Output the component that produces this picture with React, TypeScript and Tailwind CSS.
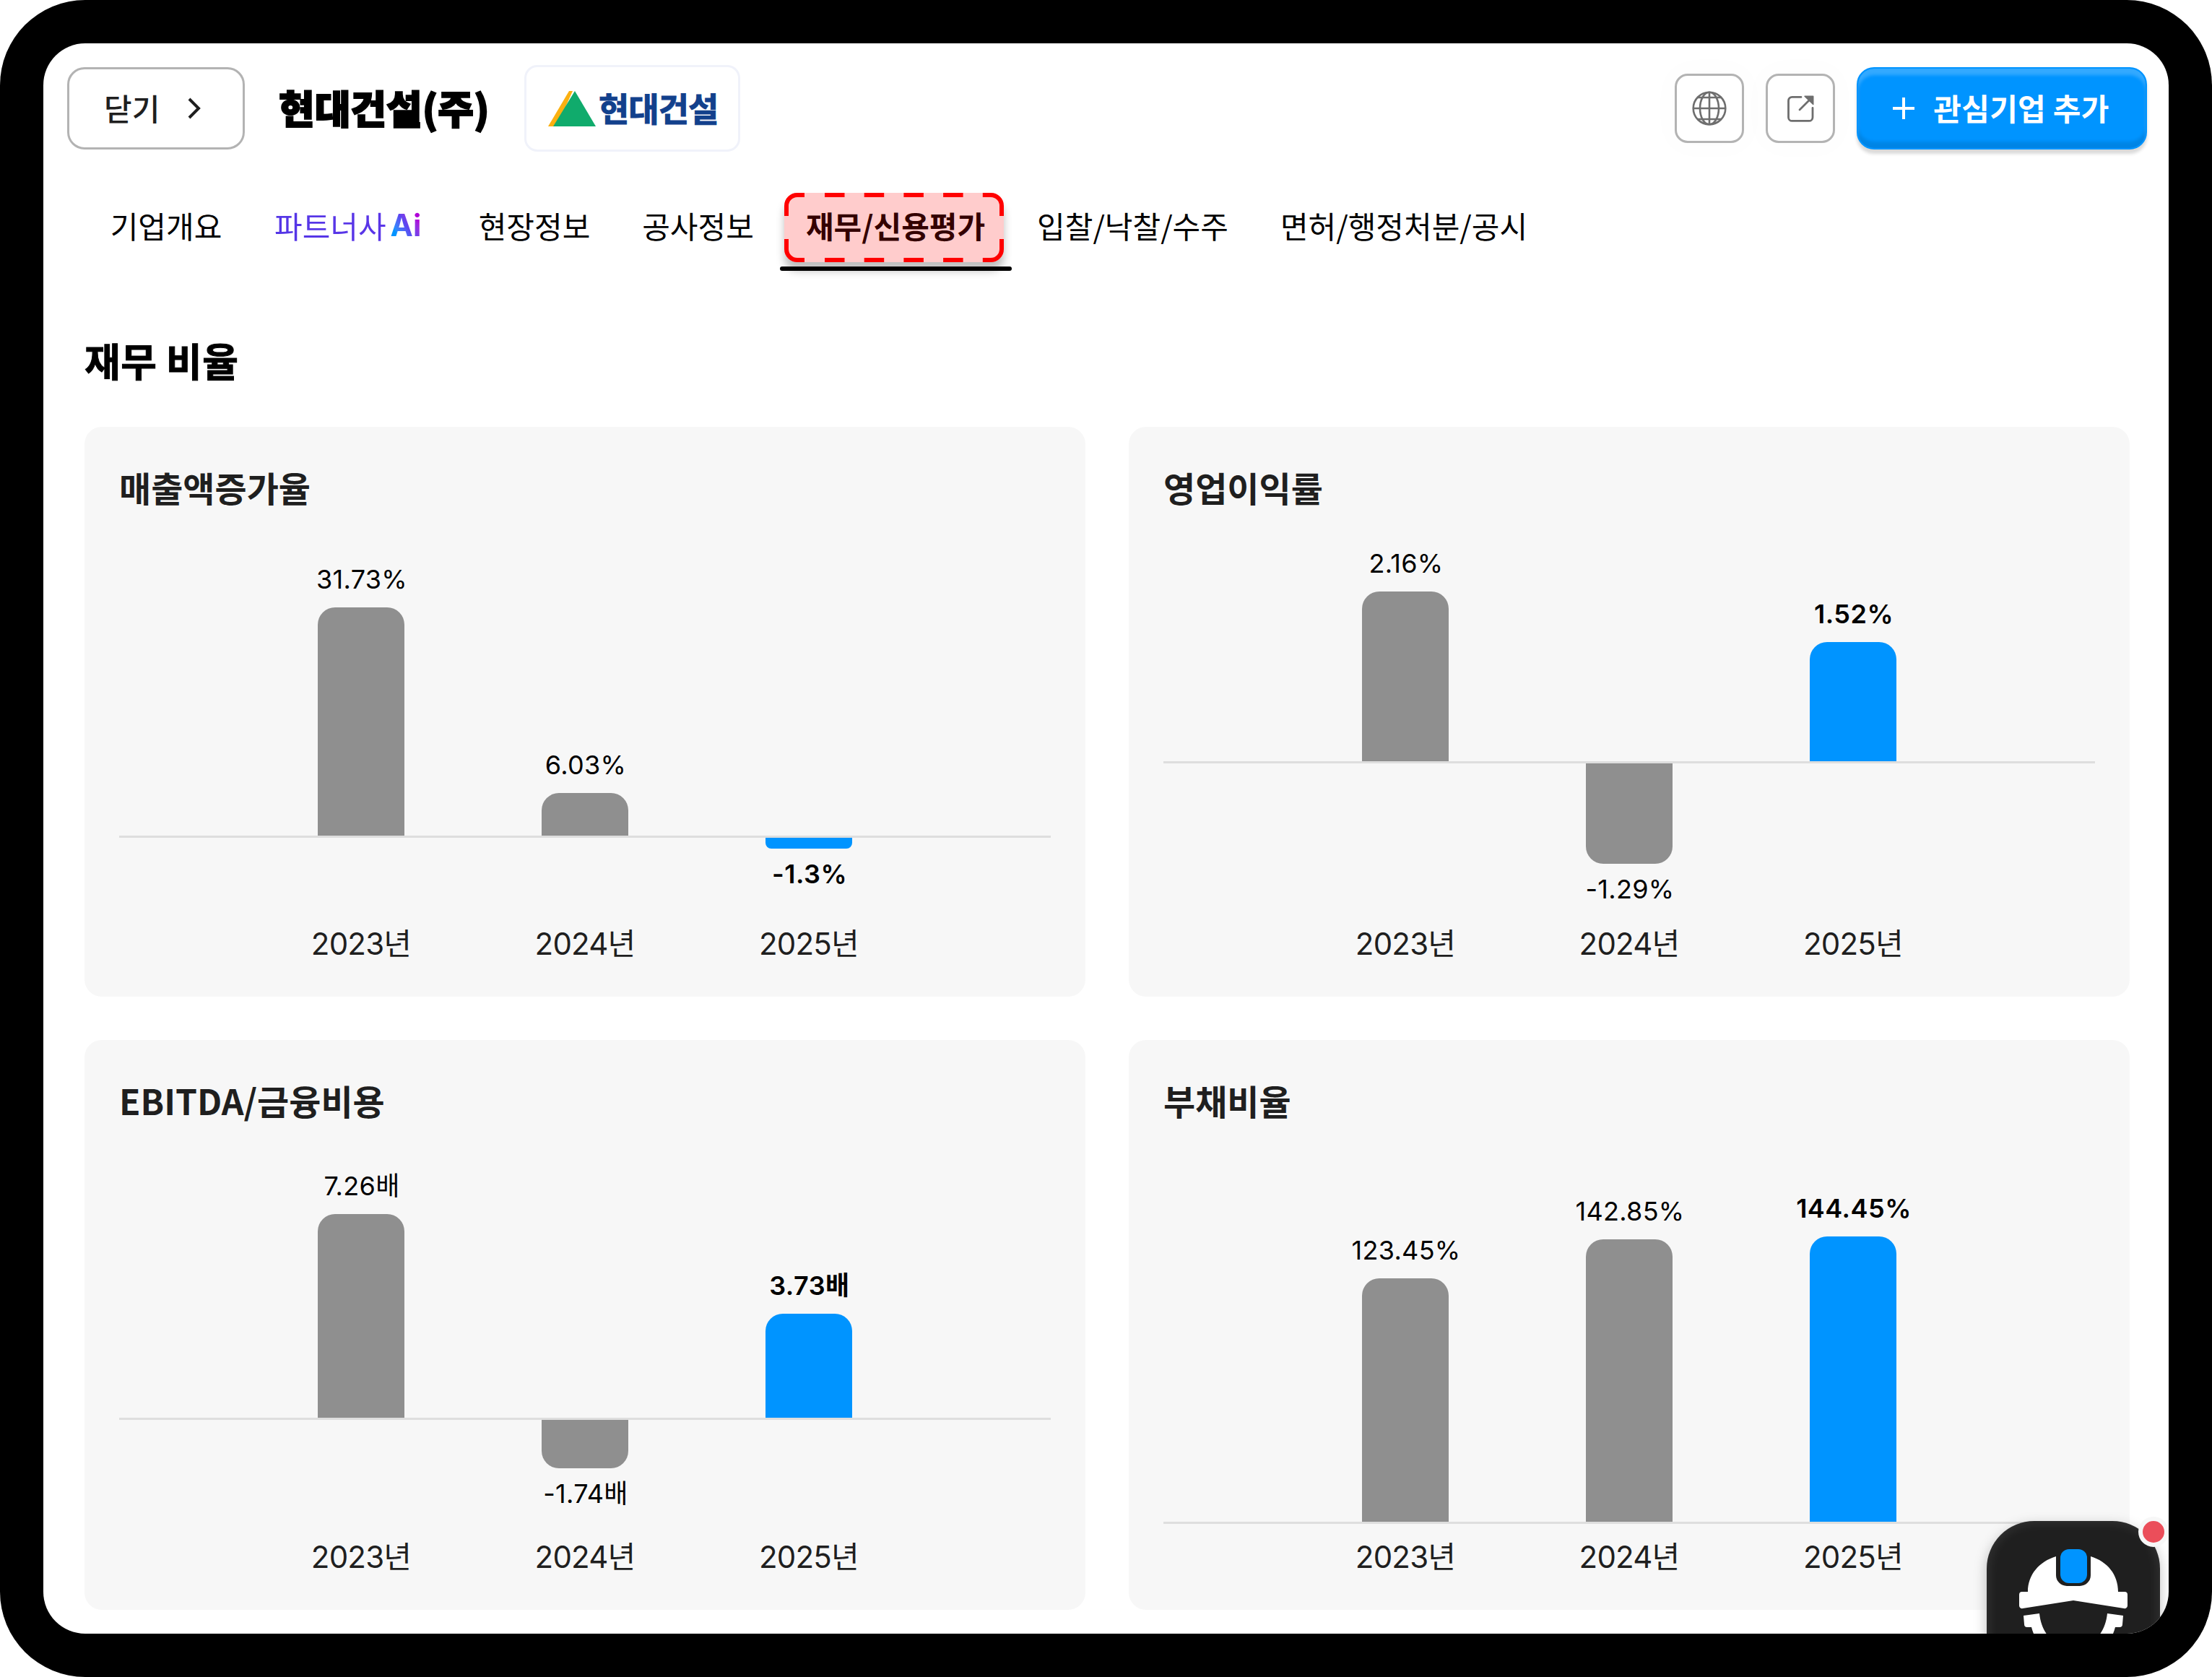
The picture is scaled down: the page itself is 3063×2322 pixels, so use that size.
import { useState } from "react";

interface Bar {
  year: string;
  label: string;
  height: number;
  negative?: boolean;
}

interface Ratio {
  title: string;
  // distance from the top of the plot to the zero line
  baseline: number;
  bars: Bar[];
}

const ratios: Ratio[] = [
  {
    title: "매출액증가율",
    baseline: 444,
    bars: [
      { year: "2023년", label: "31.73%", height: 316 },
      { year: "2024년", label: "6.03%", height: 59 },
      { year: "2025년", label: "-1.3%", height: 15, negative: true },
    ],
  },
  {
    title: "영업이익률",
    baseline: 341,
    bars: [
      { year: "2023년", label: "2.16%", height: 235 },
      { year: "2024년", label: "-1.29%", height: 139, negative: true },
      { year: "2025년", label: "1.52%", height: 165 },
    ],
  },
  {
    title: "EBITDA/금융비용",
    baseline: 401,
    bars: [
      { year: "2023년", label: "7.26배", height: 282 },
      { year: "2024년", label: "-1.74배", height: 67, negative: true },
      { year: "2025년", label: "3.73배", height: 144 },
    ],
  },
  {
    title: "부채비율",
    baseline: 545,
    bars: [
      { year: "2023년", label: "123.45%", height: 337 },
      { year: "2024년", label: "142.85%", height: 391 },
      { year: "2025년", label: "144.45%", height: 395 },
    ],
  },
];

const tabs = [
  { key: "overview", label: "기업개요", width: "w-[154px]" },
  { key: "partner", label: "파트너사", width: "w-[210px]" },
  { key: "site", label: "현장정보", width: "w-[154px]" },
  { key: "work", label: "공사정보", width: "w-[153px]" },
  { key: "finance", label: "재무/신용평가", width: "w-[248px]" },
  { key: "bid", label: "입찰/낙찰/수주", width: "w-[263px]" },
  { key: "license", label: "면허/행정처분/공시", width: "w-[342px]" },
];

function GlobeIcon() {
  return (
    <svg className="size-[48px]" viewBox="0 0 48 48" fill="none" stroke="#6e6e6e" strokeWidth="2.6">
      <circle cx="24" cy="24" r="22.3" />
      <ellipse cx="24" cy="24" rx="13" ry="22.3" />
      <path d="M24 1.5v45M1.5 24h45M8 9h32M8 39h32" />
    </svg>
  );
}

function ExternalIcon() {
  return (
    <svg className="size-[37px]" viewBox="0 0 37 37" fill="none" stroke="#6e6e6e" strokeWidth="2.8">
      <path d="M19 2.4H6.5a5 5 0 0 0-5 5v23a5 5 0 0 0 5 5H30a5 5 0 0 0 5-5V17.5" strokeLinecap="round" />
      <path d="M17 20 31 6" strokeLinecap="round" />
      <path d="M24 .5h11.5a1 1 0 0 1 1 1v11a.8.8 0 0 1-1.3.5L23.5 1.8a.8.8 0 0 1 .5-1.3z" fill="#6e6e6e" stroke="none" />
    </svg>
  );
}

function HelmetIcon() {
  return (
    <svg className="h-[150px] w-[150px]" viewBox="0 0 150 150" fill="#fff">
      <path d="M12 59C12 35 28 17 51 10V36a15 15 0 0 0 15 15h18a15 15 0 0 0 15-15V10c23 7 38 25 38 49h9a4 4 0 0 1 4 4v15a4 4 0 0 1-5 4L75 71 5 82a4 4 0 0 1-5-4V63a4 4 0 0 1 4-4z" />
      <rect x="57" y="0" width="37" height="47" rx="12" fill="#0094ff" />
      <path d="M6 92 28 89c3 28 20 47 47 47s44-19 47-47l22 3-1 12a4 4 0 0 1-4 4h-6c-6 25-28 42-58 42s-52-17-58-42h-6a4 4 0 0 1-4-4z" />
    </svg>
  );
}

// dashed frame of the highlighted tab
function DashFrame() {
  return (
    <svg className="absolute inset-0 h-[96px] w-[304px]" viewBox="0 0 304 96" fill="none" stroke="#ff0000" strokeWidth="6">
      <path d="M28 3H18A15 15 0 0 0 3 18v14M276 3h10a15 15 0 0 1 15 15v14M28 93H18A15 15 0 0 1 3 78V64M276 93h10a15 15 0 0 0 15-15V64" />
      <path d="M56 3h220M56 93h220" strokeDasharray="27.5 27.2" />
    </svg>
  );
}

function RatioBar({ bar, baseline, active }: { bar: Bar; baseline: number; active: boolean }) {
  const label = (
    <p
      className={`ml-[2px] text-[36px] leading-[44px] whitespace-nowrap text-black ${
        active ? "font-semibold tracking-[0.5px]" : "font-normal tracking-[0.3px]"
      }`}
    >
      {bar.label}
    </p>
  );
  return (
    <div className="flex w-[120px] flex-col items-center">
      {bar.negative ? (
        <>
          <div className="w-full shrink-0" style={{ height: baseline + 3 }} />
          <div
            className={`w-full shrink-0 ${bar.height < 20 ? "rounded-b-[8px]" : "rounded-b-[24px]"} ${active ? "bg-[#0094ff]" : "bg-[#8f8f8f]"}`}
            style={{ height: bar.height }}
          />
          <div className="mt-[13px]">{label}</div>
        </>
      ) : (
        <div className="flex shrink-0 flex-col items-center justify-end" style={{ height: baseline }}>
          <div className="mb-[17px]">{label}</div>
          <div
            className={`w-[120px] rounded-t-[24px] ${active ? "bg-[#0094ff]" : "bg-[#8f8f8f]"}`}
            style={{ height: bar.height }}
          />
        </div>
      )}
    </div>
  );
}

function RatioCard({ ratio }: { ratio: Ratio }) {
  return (
    <section className="h-[789px] rounded-[24px] bg-[#f7f7f7] px-[48px] pt-[51px]">
      <h3 className="h-[71px] font-['Noto_Sans_CJK_KR',sans-serif] text-[48px] leading-[64px] font-bold text-[#1f1f1f]">
        {ratio.title}
      </h3>
      <div className="relative h-[560px]">
        <div className="absolute inset-x-0 h-[3px] bg-[#dedede]" style={{ top: ratio.baseline }} />
        <div className="flex h-full gap-[190px] pl-[275px]">
          {ratio.bars.map((bar, i) => (
            <RatioBar key={bar.year} bar={bar} baseline={ratio.baseline} active={i === 2} />
          ))}
        </div>
      </div>
      <div className="flex gap-[110px] pt-[4px] pl-[235px]">
        {ratio.bars.map((bar) => (
          <p key={bar.year} className="w-[200px] text-center text-[42px] leading-[60px] tracking-[-0.8px] text-[#1f1f1f]">
            {bar.year}
          </p>
        ))}
      </div>
    </section>
  );
}

export default function App() {
  const [tab, setTab] = useState("finance");

  return (
    <div className="h-[2322px] w-[3063px] bg-white font-['Inter','Noto_Sans_CJK_KR',sans-serif]">
      <div className="h-full rounded-[118px] bg-black p-[60px]">
        <div className="relative h-full overflow-hidden rounded-[58px] bg-white">
          {/* Header */}
          <header className="flex h-[180px] items-center pr-[30px] pl-[33px] font-['Noto_Sans_CJK_KR',sans-serif]">
            <button className="flex h-[114px] w-[246px] items-center justify-between rounded-[24px] border-[3px] border-[#b3b3b3] pr-[57px] pl-[48px] text-[42px] font-medium text-[#1f1f1f]">
              <span className="pb-[4px]">닫기</span>
              <svg className="h-[32px] w-[20px]" viewBox="0 0 20 32" fill="none" stroke="#1f1f1f" strokeWidth="4">
                <path d="m3 3 13 13L3 29" />
              </svg>
            </button>
            <h1 className="ml-[47px] w-[340px] pb-[3px] text-[54px] font-black whitespace-nowrap text-black [-webkit-text-stroke:2px_#000]">
              현대건설(주)
            </h1>
            <div className="flex h-[120px] w-[299px] items-center rounded-[18px] border-[3px] border-[#f0f2fa] pl-[30px]">
              <svg className="h-[49px] w-[66px]" viewBox="0 0 66 49">
                <path d="M0 49 29 0h5L12 49z" fill="#fbb010" />
                <path d="M7 49 37 0l29 49z" fill="#10ab6c" />
              </svg>
              <span className="ml-[4px] pb-[4px] text-[46px] font-bold tracking-[-1px] whitespace-nowrap text-[#12408c] [-webkit-text-stroke:1px_#12408c]">
                현대건설
              </span>
            </div>
            <div className="ml-auto flex items-center gap-[30px]">
              <button className="flex size-[96px] items-center justify-center rounded-[18px] border-[3px] border-[#b3b3b3] shadow-[0_0_36px_12px_rgba(0,0,0,0.012)]">
                <GlobeIcon />
              </button>
              <button className="flex size-[96px] items-center justify-center rounded-[18px] border-[3px] border-[#b3b3b3] shadow-[0_0_36px_12px_rgba(0,0,0,0.012)]">
                <ExternalIcon />
              </button>
              <button className="flex h-[114px] w-[402px] items-center justify-center gap-[26px] rounded-[24px] border-[2px] border-[#0094ff] bg-[#0094ff] pr-[2px] text-[42px] font-bold tracking-[0.3px] text-white shadow-[0_6px_4px_rgba(0,0,0,0.15),inset_0_9px_4px_rgba(255,255,255,0.2),inset_0_-9px_4px_rgba(0,0,0,0.1)]">
                <svg className="size-[30px]" viewBox="0 0 30 30" stroke="#fff" strokeWidth="4">
                  <path d="M15 0v30M0 15h30" />
                </svg>
                <span className="pb-[4px]">관심기업 추가</span>
              </button>
            </div>
          </header>

          {/* Tabs */}
          <nav className="flex h-[160px] gap-[73px] pt-[26px] pl-[93px] font-['Noto_Sans_CJK_KR',sans-serif]">
            {tabs.map((t) => (
              <button
                key={t.key}
                onClick={() => setTab(t.key)}
                className={`relative flex h-[96px] shrink-0 items-center justify-center pb-[5px] text-[42px] whitespace-nowrap text-black ${t.width} ${
                  tab === t.key ? "font-bold" : "font-normal"
                }`}
              >
                {t.key === "partner" ? (
                  <span className="flex w-full items-center gap-[6px]">
                    <span className="bg-linear-to-r from-[#5436e6] to-[#5a35e8] bg-clip-text text-transparent">{t.label}</span>
                    <span className="bg-linear-to-tr from-[#0094ff] from-25% via-[#5b45f0] to-[#b000d8] to-75% bg-clip-text font-['Inter',sans-serif] font-bold text-transparent">
                      Ai
                    </span>
                  </span>
                ) : (
                  t.label
                )}
                {tab === t.key && (
                  <>
                    <span className="absolute top-[1px] -left-[30px] h-[96px] w-[304px] rounded-[18px] bg-[#ff0000]/20 shadow-[0_12px_12px_rgba(0,0,0,0.25)]">
                      <DashFrame />
                    </span>
                    <span className="absolute top-[103px] -left-[36px] h-[6px] w-[321px] rounded-full bg-black" />
                  </>
                )}
              </button>
            ))}
          </nav>

          <main className="px-[57px]">
            <h2 className="h-[191px] pt-[59px] font-['Noto_Sans_CJK_KR',sans-serif] text-[54px] leading-[80px] font-bold tracking-[0.5px] text-black [-webkit-text-stroke:1px_#000]">
              재무 비율
            </h2>
            <div className="grid grid-cols-[1386px_1386px] gap-[60px]">
              {ratios.map((r) => (
                <RatioCard key={r.title} ratio={r} />
              ))}
            </div>
          </main>

          {/* Chat launcher */}
          <div className="absolute top-[2046px] left-[2691px] size-[240px] rounded-[66px] bg-[#1f1f1f] shadow-[0_6px_18px_rgba(0,0,0,0.25),inset_0_0_18px_rgba(255,255,255,0.12)]">
            <div className="absolute top-[39px] left-[45px]">
              <HelmetIcon />
            </div>
            <span className="absolute -top-[6px] left-[210px] size-[42px] rounded-full border-[6px] border-[#f7f7f7] bg-[#eb4e5a]" />
          </div>
        </div>
      </div>
    </div>
  );
}
